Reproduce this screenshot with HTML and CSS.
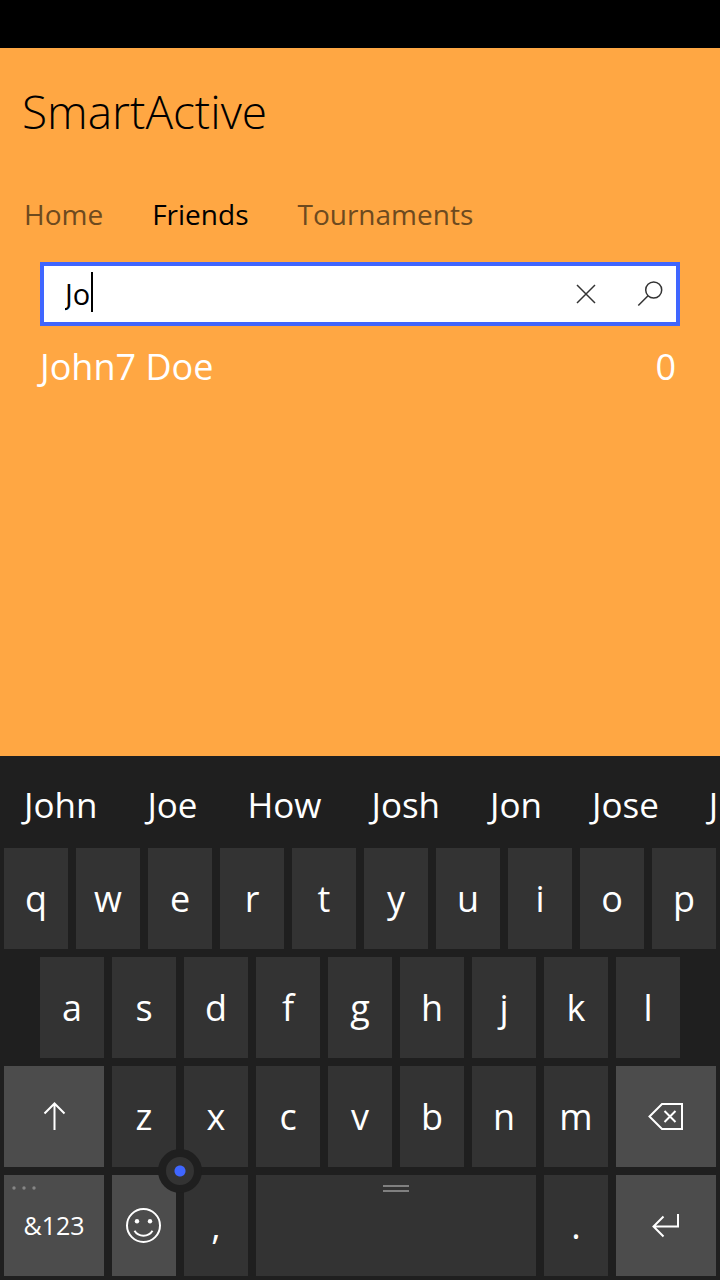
FILE: index.html
```html
<!DOCTYPE html>
<html lang="en">
<head>
<meta charset="utf-8">
<meta name="viewport" content="width=device-width, initial-scale=1">
<title>SmartActive</title>
<link rel="stylesheet" href="styles.css">
</head>
<body>
<div class="status-bar"></div>
<main class="app">
  <h1 class="title">SmartActive</h1>
  <nav class="tabs">
    <a class="tab" href="#home">Home</a>
    <a class="tab tab-active" href="#friends" aria-current="page">Friends</a>
    <a class="tab" href="#tournaments">Tournaments</a>
  </nav>
  <form class="search" role="search">
    <div class="search-text">
      <input class="search-input" type="text" value="Jo" aria-label="Search friends">
      <span class="caret"></span>
    </div>
    <button class="search-button search-clear" type="button" aria-label="Clear">
      <svg width="20" height="20" viewBox="0 0 20 20"><path d="M1 1 19 19M19 1 1 19"/></svg>
    </button>
    <button class="search-button" type="submit" aria-label="Search">
      <svg width="26" height="26" viewBox="0 0 26 26"><circle cx="16.700" cy="9" r="8"/><path d="M11 14.700 1.300 24.500"/></svg>
    </button>
  </form>
  <ul class="results">
    <li class="result"><span>John7 Doe</span><span>0</span></li>
  </ul>
</main>
<section class="keyboard" aria-label="Keyboard">
  <div class="suggestions">
    <button class="word">John</button>
    <button class="word">Joe</button>
    <button class="word">How</button>
    <button class="word">Josh</button>
    <button class="word">Jon</button>
    <button class="word">Jose</button>
    <button class="word">J</button>
  </div>
  <div class="row">
    <button class="key">q</button><button class="key">w</button><button class="key">e</button><button class="key">r</button><button class="key">t</button><button class="key">y</button><button class="key">u</button><button class="key">i</button><button class="key">o</button><button class="key">p</button>
  </div>
  <div class="row row-inset">
    <button class="key">a</button><button class="key">s</button><button class="key">d</button><button class="key">f</button><button class="key">g</button><button class="key">h</button><button class="key">j</button><button class="key">k</button><button class="key">l</button>
  </div>
  <div class="row">
    <button class="key key-wide key-light" aria-label="Shift">
      <svg width="24" height="30" viewBox="0 0 24 30"><path d="M12.500 28V1.500M2.500 11.500 12.500 1.500 22.500 11.500"/></svg>
    </button>
    <button class="key">z</button><button class="key">x</button><button class="key">c</button><button class="key">v</button><button class="key">b</button><button class="key">n</button><button class="key">m</button>
    <button class="key key-wide key-light" aria-label="Backspace">
      <svg width="36" height="28" viewBox="0 0 36 28"><path d="M1.500 13.500 14 1H34V26H14ZM16.500 8 27.500 19M27.500 8 16.500 19"/></svg>
    </button>
  </div>
  <div class="row">
    <button class="key key-wide key-light key-symbols">&amp;123
      <svg class="dots" width="24" height="4" viewBox="0 0 24 4"><circle cx="2" cy="2" r="1.700"/><circle cx="12" cy="2" r="1.700"/><circle cx="22" cy="2" r="1.700"/></svg>
    </button>
    <button class="key key-light key-emoji" aria-label="Emoji">
      <svg width="36" height="36" viewBox="0 0 36 36"><circle cx="17.500" cy="17.500" r="16.500"/><path d="M8.500 22.700C12.500 29.300 22.500 29.300 26.500 22.700"/><circle class="eye" cx="11" cy="13.200" r="2.200"/><circle class="eye" cx="24" cy="13.200" r="2.200"/></svg>
      <span class="cursor-stick"></span>
    </button>
    <button class="key">,</button>
    <button class="key key-space" aria-label="Space"><span class="grip"></span></button>
    <button class="key">.</button>
    <button class="key key-wide key-light" aria-label="Enter">
      <svg width="28" height="24" viewBox="0 0 28 24"><path d="M26 0V12.500H1.500M11.500 2.500 1.500 12.500 11.500 22.500"/></svg>
    </button>
  </div>
</section>
</body>
</html>
```
FILE: styles.css
```css
* {
  box-sizing: border-box;
}

body {
  margin: 0;
  min-height: 100vh;
  display: flex;
  flex-direction: column;
  background: #ffa743;
  color: #000;
  font-family: "Open Sans", "Noto Sans", sans-serif;
  overflow-x: hidden;
}

button {
  margin: 0;
  padding: 0;
  border: 0;
  background: none;
  color: inherit;
  font: inherit;
}

svg {
  fill: none;
  stroke: currentColor;
}

.status-bar {
  height: 48px;
  background: #000;
}

.app {
  flex: 1;
}

.title {
  margin: 0;
  padding: 31px 22px 0;
  font-size: 46px;
  font-weight: 350;
  line-height: 64px;
}

.tabs {
  display: flex;
  gap: 49px;
  padding: 50px 24px 0;
  font-size: 28px;
  line-height: 42px;
}

.tab {
  color: #6d4a1f;
  text-decoration: none;
}

.tab-active {
  color: #000;
}

.search {
  display: flex;
  align-items: stretch;
  height: 64px;
  margin: 27px 40px 0;
  border: 4px solid #3f66ff;
  background: #fff;
}

.search-text {
  flex: 1;
  display: flex;
  align-items: center;
  padding-left: 16px;
}

.search-input {
  field-sizing: content;
  padding: 0 1px 2px 5px;
  border: 0;
  outline: 0;
  background: none;
  color: #000;
  font: inherit;
  font-size: 29px;
}

.caret {
  width: 2px;
  height: 40px;
  margin-bottom: 4px;
  background: #000;
}

.search-button {
  display: flex;
  align-items: center;
  justify-content: center;
  width: 52px;
  color: #333;
  stroke-width: 1.5;
}

.search-clear {
  width: 76px;
}

.results {
  margin: 0;
  padding: 16px 44px 0 40px;
  list-style: none;
  color: #fff;
  font-size: 36px;
  line-height: 50px;
}

.result {
  display: flex;
  justify-content: space-between;
}

.keyboard {
  display: flex;
  flex-direction: column;
  gap: 8px;
  padding: 0 4px 4px;
  background: #1f1f1f;
  color: #fff;
  overflow: hidden;
}

.suggestions {
  display: flex;
  gap: 50px;
  height: 84px;
  padding: 12px 0 0 20px;
  margin-right: -4px;
  overflow: hidden;
  font-size: 35px;
}

.word {
  flex: none;
}

.row {
  display: flex;
  gap: 8px;
}

.row-inset {
  padding: 0 36px;
}

.key {
  position: relative;
  display: flex;
  flex: 64 1 0;
  align-items: center;
  justify-content: center;
  height: 101px;
  background: #333;
  font-size: 36px;
  stroke-width: 2;
}

.key-wide {
  flex-grow: 100;
}

.key-space {
  flex-grow: 280;
}

.key-light {
  background: #4c4c4c;
}

.key-symbols {
  padding-bottom: 2px;
  font-size: 25px;
}

.dots {
  position: absolute;
  top: 11px;
  left: 8px;
  fill: #858585;
  stroke: none;
}

.eye {
  fill: currentColor;
  stroke: none;
}

.key-emoji {
  z-index: 1;
}

.cursor-stick {
  position: absolute;
  top: -26px;
  right: -26px;
  width: 44px;
  height: 44px;
  border: 8px solid #1f1f1f;
  border-radius: 50%;
  background: radial-gradient(circle, #3f66ff 5px, #333 6px);
}

.grip {
  position: absolute;
  top: 10px;
  width: 26px;
  height: 7px;
  border: solid #808080;
  border-width: 2px 0;
}
```
